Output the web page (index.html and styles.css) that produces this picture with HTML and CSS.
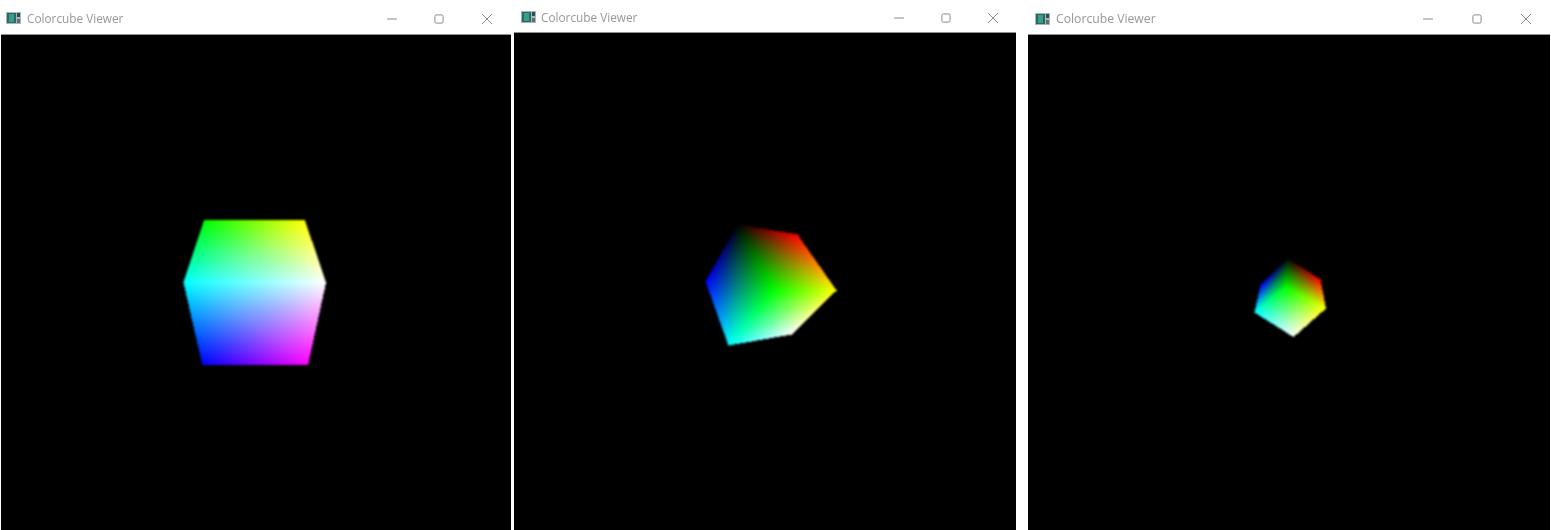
FILE: index.html
```html
<!DOCTYPE html>
<html lang="en">
<head>
<meta charset="utf-8">
<title>Colorcube Viewer</title>
<link rel="stylesheet" href="styles.css">
</head>
<body>
<main class="desktop">
  <section class="window window-a">
    <header class="titlebar">
      <svg class="app-icon" viewBox="0 0 15 12"><rect width="15" height="12" fill="#aeb4b4"/><rect x="1" y="1" width="9" height="10" fill="#1f6f66"/><rect x="3" y="2" width="5" height="8" fill="#3d9c86"/><rect x="11" y="1" width="3" height="4" fill="#2f4a58"/><rect x="11" y="7" width="3" height="4" fill="#5c6e78"/></svg>
      <span class="title">Colorcube Viewer</span>
      <div class="controls">
        <svg class="ctl" viewBox="0 0 11 11"><path d="M0 5.5H11"/></svg>
        <svg class="ctl" viewBox="0 0 11 11"><rect x="1" y="1" width="9" height="9" rx="1.5"/></svg>
        <svg class="ctl" viewBox="0 0 11 11"><path d="M0 0L11 11M11 0L0 11"/></svg>
      </div>
    </header>
    <div class="viewport"><canvas class="scene" data-cube="a" width="510" height="495"></canvas></div>
  </section>
  <section class="window window-b">
    <header class="titlebar">
      <svg class="app-icon" viewBox="0 0 15 12"><rect width="15" height="12" fill="#aeb4b4"/><rect x="1" y="1" width="9" height="10" fill="#1f6f66"/><rect x="3" y="2" width="5" height="8" fill="#3d9c86"/><rect x="11" y="1" width="3" height="4" fill="#2f4a58"/><rect x="11" y="7" width="3" height="4" fill="#5c6e78"/></svg>
      <span class="title">Colorcube Viewer</span>
      <div class="controls">
        <svg class="ctl" viewBox="0 0 11 11"><path d="M0 5.5H11"/></svg>
        <svg class="ctl" viewBox="0 0 11 11"><rect x="1" y="1" width="9" height="9" rx="1.5"/></svg>
        <svg class="ctl" viewBox="0 0 11 11"><path d="M0 0L11 11M11 0L0 11"/></svg>
      </div>
    </header>
    <div class="viewport"><canvas class="scene" data-cube="b" width="502" height="497"></canvas></div>
  </section>
  <section class="window window-c">
    <header class="titlebar">
      <svg class="app-icon" viewBox="0 0 15 12"><rect width="15" height="12" fill="#aeb4b4"/><rect x="1" y="1" width="9" height="10" fill="#1f6f66"/><rect x="3" y="2" width="5" height="8" fill="#3d9c86"/><rect x="11" y="1" width="3" height="4" fill="#2f4a58"/><rect x="11" y="7" width="3" height="4" fill="#5c6e78"/></svg>
      <span class="title">Colorcube Viewer</span>
      <div class="controls">
        <svg class="ctl" viewBox="0 0 11 11"><path d="M0 5.5H11"/></svg>
        <svg class="ctl" viewBox="0 0 11 11"><rect x="1" y="1" width="9" height="9" rx="1.5"/></svg>
        <svg class="ctl" viewBox="0 0 11 11"><path d="M0 0L11 11M11 0L0 11"/></svg>
      </div>
    </header>
    <div class="viewport"><canvas class="scene" data-cube="c" width="522" height="495"></canvas></div>
  </section>
</main>
<script src="cube.js"></script>
</body>
</html>
```

FILE: styles.css
```css
* { box-sizing: border-box; }

html, body {
  margin: 0;
  height: 100%;
  background: #fff;
  overflow: hidden;
}

.desktop {
  display: flex;
  height: 530px;
  width: 1551px;
  font-family: "Open Sans", "Noto Sans", sans-serif;
}

.window {
  display: flex;
  flex-direction: column;
  flex: none;
}

.window-a { width: 510px; margin-right: 3px; margin-left: 1px; }
.window-b { width: 502px; margin-right: 12px; }
.window-c { width: 522px; }

.titlebar {
  display: flex;
  align-items: center;
  flex: none;
  height: 35px;
  padding: 2px 0 0 5px;
  background: #fff;
  border-bottom: 1px solid #8f8f8f;
}

.window-b .titlebar { height: 33px; padding-left: 7px; }
.window-c .titlebar { padding: 3px 0 0 7px; }

.app-icon {
  width: 15px;
  height: 12px;
  flex: none;
  margin-right: 6px;
  filter: blur(0.7px);
}

.window-b .app-icon { margin-right: 5px; }

.title {
  font-size: 11.8px;
  line-height: 16px;
  color: #94989c;
  filter: blur(0.55px);
  white-space: nowrap;
}

.window-c .title { font-size: 12.2px; }

.controls {
  display: flex;
  align-items: center;
  gap: 37.5px;
  margin-top: 1px;
  margin-left: auto;
  margin-right: 19.5px;
}

.window-b .controls { gap: 37px; margin-right: 18px; }
.window-c .controls { gap: 39px; margin-right: 19px; }

.ctl {
  width: 10px;
  height: 10px;
  flex: none;
  fill: none;
  stroke: #7f7f7f;
  stroke-width: 1;
  filter: blur(0.45px);
}

.viewport {
  flex: 1;
  min-height: 0;
  background: #000;
  overflow: hidden;
}

.scene {
  display: block;
  filter: blur(0.8px);
}
```

FILE: cube.js
```js
// Gouraud-shaded colour cubes: each quad is [vertices, colours] in canvas pixels.
var K = [0, 0, 0], R = [255, 0, 0], G = [0, 255, 0], B = [0, 0, 255],
    Y = [255, 255, 0], C = [0, 255, 255], M = [255, 0, 255], W = [255, 255, 255];

var CUBES = {
  a: { ox: 1, oy: 35, faces: [
    [[[203.5, 220], [304.5, 220], [325.5, 282], [183, 282]], [G, Y, W, C]],
    [[[183, 282], [325.5, 282], [307.5, 364.5], [202, 364.5]], [C, W, M, B]]
  ] },
  b: { ox: 514, oy: 33, faces: [
    [[[737, 224], [797, 234], [836, 290], [773, 290]], [K, R, Y, G]],
    [[[737, 224], [773, 290], [728, 345], [705, 281]], [K, G, C, B]],
    [[[773, 290], [836, 290], [791, 334], [728, 345]], [G, Y, W, C]]
  ] },
  c: { ox: 1028, oy: 35, faces: [
    [[[1287, 257.5], [1320, 279], [1325.5, 308], [1285, 287]], [K, R, Y, G]],
    [[[1287, 257.5], [1285, 287], [1254, 312], [1260, 285]], [K, G, C, B]],
    [[[1285, 287], [1325.5, 308], [1293, 336.5], [1254, 312]], [G, Y, W, C]]
  ] }
};

function tri(img, p, c) {
  var w = img.width, h = img.height, d = img.data;
  var x0 = Math.floor(Math.min(p[0][0], p[1][0], p[2][0])), x1 = Math.ceil(Math.max(p[0][0], p[1][0], p[2][0]));
  var y0 = Math.floor(Math.min(p[0][1], p[1][1], p[2][1])), y1 = Math.ceil(Math.max(p[0][1], p[1][1], p[2][1]));
  var den = (p[1][1] - p[2][1]) * (p[0][0] - p[2][0]) + (p[2][0] - p[1][0]) * (p[0][1] - p[2][1]);
  if (!den) return;
  for (var y = Math.max(0, y0); y <= y1 && y < h; y++) {
    for (var x = Math.max(0, x0); x <= x1 && x < w; x++) {
      var a = ((p[1][1] - p[2][1]) * (x - p[2][0]) + (p[2][0] - p[1][0]) * (y - p[2][1])) / den;
      var b = ((p[2][1] - p[0][1]) * (x - p[2][0]) + (p[0][0] - p[2][0]) * (y - p[2][1])) / den;
      var g = 1 - a - b;
      if (a < -0.001 || b < -0.001 || g < -0.001) continue;
      var i = (y * w + x) * 4;
      for (var k = 0; k < 3; k++) d[i + k] = a * c[0][k] + b * c[1][k] + g * c[2][k];
      d[i + 3] = 255;
    }
  }
}

function avg(list) {
  var out = [0, 0];
  if (list[0].length === 3) out = [0, 0, 0];
  list.forEach(function (v) { for (var k = 0; k < out.length; k++) out[k] += v[k] / list.length; });
  return out;
}

document.querySelectorAll('.scene').forEach(function (canvas) {
  var cube = CUBES[canvas.dataset.cube];
  var ctx = canvas.getContext('2d');
  ctx.fillStyle = '#000';
  ctx.fillRect(0, 0, canvas.width, canvas.height);
  var img = ctx.getImageData(0, 0, canvas.width, canvas.height);
  cube.faces.forEach(function (face) {
    var pts = face[0].map(function (v) { return [v[0] - cube.ox, v[1] - cube.oy]; });
    var cols = face[1];
    var mid = avg(pts), midC = avg(cols);
    for (var i = 0; i < 4; i++) {
      var j = (i + 1) % 4;
      tri(img, [pts[i], pts[j], mid], [cols[i], cols[j], midC]);
    }
  });
  ctx.putImageData(img, 0, 0);
});
```
